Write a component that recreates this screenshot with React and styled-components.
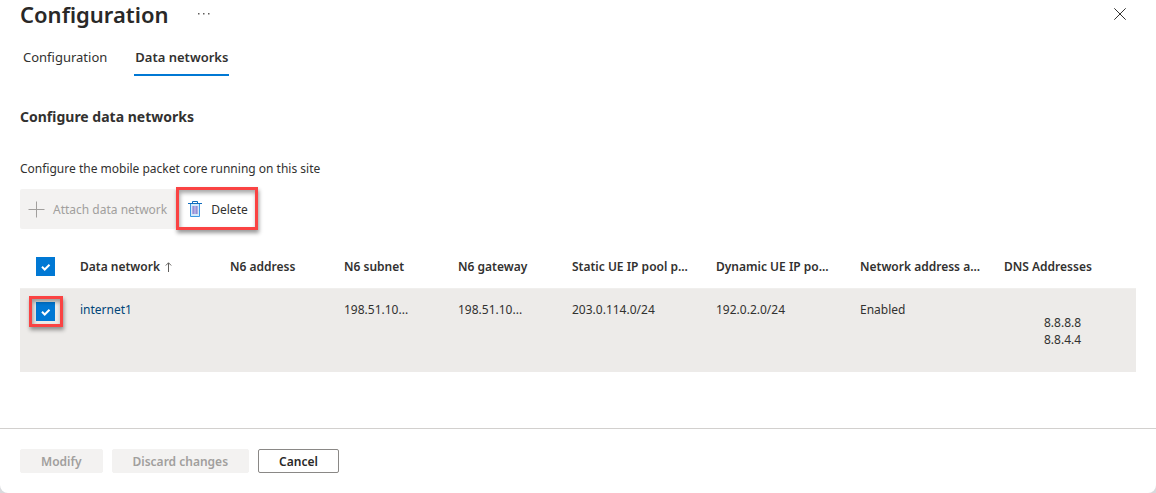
import React, { useState } from "react";
import styled, { createGlobalStyle, css } from "styled-components";

const GlobalStyle = createGlobalStyle`
  *, *::before, *::after { box-sizing: border-box; }
  body {
    margin: 0;
    background: #d9dadd;
    color: #323130;
    font: 12px/17px "Segoe UI", "Noto Sans", "Open Sans", sans-serif;
  }
  button { font: inherit; color: inherit; }
`;

const Blade = styled.div`
  display: flex;
  flex-direction: column;
  min-height: 100vh;
  background: #fff;
  border-radius: 0 0 8px 8px;
`;

const Header = styled.header`
  display: flex;
  align-items: center;
  height: 28px;
  padding: 0 28px 0 20px;
`;

const Title = styled.h1`
  margin: 0;
  font-size: 22px;
  line-height: 26px;
  font-weight: 600;
  color: #292827;
`;

const IconButton = styled.button`
  display: flex;
  align-items: center;
  justify-content: center;
  width: 16px;
  height: 16px;
  padding: 0;
  border: 0;
  background: none;
`;

const MoreButton = styled(IconButton)`
  margin-left: 27px;
`;

const CloseButton = styled(IconButton)`
  margin-left: auto;
`;

const TabList = styled.nav`
  display: flex;
  gap: 26px;
  margin-top: 12px;
  padding: 0 22px;
`;

const Tab = styled.button`
  height: 36px;
  padding: 0 1px;
  border: 0;
  border-bottom: 2px solid ${(p) => (p.$active ? "#0078d4" : "transparent")};
  background: none;
  font-size: 13px;
  font-weight: ${(p) => (p.$active ? 600 : 400)};
`;

const Content = styled.main`
  flex: 1;
  padding: 30px 20px 56px;
`;

const SectionTitle = styled.h2`
  margin: 0;
  font-size: 14px;
  line-height: 22px;
  font-weight: 700;
`;

const Description = styled.p`
  margin: 32px 0 12px;
`;

const Toolbar = styled.div`
  display: flex;
`;

const Command = styled.button`
  position: relative;
  display: flex;
  align-items: center;
  gap: 8px;
  height: 40px;
  padding: 0 9px 0 8px;
  border: 0;
  border-radius: 2px;
  background: #fff;

  &:disabled {
    background: #f3f2f1;
    color: #a19f9d;
  }
`;

const DeleteCommand = styled(Command)`
  padding: 0 10px 0 11px;
`;

const Callout = styled.span`
  position: absolute;
  inset: ${(p) => p.$inset};
  border: 3px solid #fa4343;
  box-shadow: 1px 3px 4px rgba(0, 0, 0, 0.4), inset 1px 3px 4px rgba(0, 0, 0, 0.35);
  pointer-events: none;
`;

const Table = styled.table`
  width: 100%;
  margin-top: 16px;
  border-collapse: collapse;
  table-layout: fixed;
`;

const Col = styled.col`
  width: ${(p) => (p.$width ? `${p.$width}px` : "auto")};
`;

const cell = css`
  padding: 0 8px;
  text-align: left;
  white-space: nowrap;
`;

const HeadCell = styled.th`
  ${cell}
  height: 43px;
  font-weight: 600;
`;

const Row = styled.tr`
  height: 84px;
  background: #edebe9;
  border-top: 1px solid #f0efed;
`;

const Cell = styled.td`
  ${cell}
  padding-top: 12px;
  vertical-align: top;
`;

const CheckWrap = styled.label`
  position: relative;
  display: block;
  width: 19px;
  height: 19px;
  margin: 1px 0 0 8px;
`;

const CheckInput = styled.input`
  appearance: none;
  display: block;
  width: 19px;
  height: 19px;
  margin: 0;
  border: 1px solid #605e5c;
  background: #fff;

  &:checked {
    border-color: #0078d4;
    background: #0078d4;
  }
`;

const CheckMark = styled.svg`
  position: absolute;
  inset: 0;
  pointer-events: none;
`;

const SortArrow = styled.svg`
  margin-left: 5px;
  vertical-align: -1px;
`;

const ResourceLink = styled.a`
  color: #004578;
  text-decoration: none;
`;

const AddressList = styled.ul`
  margin: 13px 0 0;
  padding-left: 40px;
  list-style: none;
`;

const Footer = styled.footer`
  display: flex;
  gap: 9px;
  padding: 20px;
  border-top: 1px solid #d2d0ce;
`;

const FooterButton = styled.button`
  height: 24px;
  padding: 0 20px;
  border: 1px solid #8a8886;
  border-radius: 2px;
  background: #fff;
  font-weight: 600;
  color: #292827;

  &:disabled {
    border-color: #f3f2f1;
    background: #f3f2f1;
    color: #a19f9d;
  }
`;

const columns = [
  { name: "Data network", width: 150, sorted: true },
  { name: "N6 address", width: 114 },
  { name: "N6 subnet", width: 114 },
  { name: "N6 gateway", width: 114 },
  { name: "Static UE IP pool p...", width: 144 },
  { name: "Dynamic UE IP po...", width: 144 },
  { name: "Network address a...", width: 144 },
  { name: "DNS Addresses" },
];

function Checkbox({ label, checked, onChange, children }) {
  return (
    <CheckWrap>
      <CheckInput
        type="checkbox"
        aria-label={label}
        checked={checked}
        onChange={(e) => onChange(e.target.checked)}
      />
      {checked && (
        <CheckMark width="19" height="19" viewBox="0 0 19 19" fill="none">
          <path d="M6 9.8l2.7 2.7 4.8-4.8" stroke="#fff" strokeWidth="2" />
        </CheckMark>
      )}
      {children}
    </CheckWrap>
  );
}

function PlusIcon() {
  return (
    <svg width="17" height="17" viewBox="0 0 17 17" stroke="#a19f9d" aria-hidden="true">
      <path d="M8.5 0.5v16M0.5 8.5h16" />
    </svg>
  );
}

function TrashIcon() {
  return (
    <svg width="16" height="16" viewBox="0 0 16 16" fill="none" aria-hidden="true">
      <path d="M3.5 2.5h9v13h-9z" fill="#d3eafa" stroke="#3b97e3" />
      <path d="M5 5h6v8h-6z" fill="#b3a9e0" />
      <path d="M6.5 5v8M9.5 5v8" stroke="#8f93d8" />
      <path d="M1 2.5h14M5.5 2.5v-2h5v2" stroke="#0f6cbd" />
    </svg>
  );
}

export default function App() {
  const [tab, setTab] = useState("Data networks");
  const [selected, setSelected] = useState(true);

  return (
    <>
      <GlobalStyle />
      <Blade>
        <Header>
          <Title>Configuration</Title>
          <MoreButton aria-label="More options">
            <svg width="12" height="2" viewBox="0 0 12 2" fill="#605e5c">
              <path d="M0 0h1.5v1.5H0zM5 0h1.5v1.5H5zM10 0h1.5v1.5H10z" />
            </svg>
          </MoreButton>
          <CloseButton aria-label="Close">
            <svg width="12" height="12" viewBox="0 0 12 12" stroke="#323130">
              <path d="M0.3 0.3l11.4 11.4M11.7 0.3L0.3 11.7" />
            </svg>
          </CloseButton>
        </Header>

        <TabList>
          {["Configuration", "Data networks"].map((name) => (
            <Tab key={name} $active={tab === name} onClick={() => setTab(name)}>
              {name}
            </Tab>
          ))}
        </TabList>

        <Content>
          <SectionTitle>Configure data networks</SectionTitle>
          <Description>Configure the mobile packet core running on this site</Description>

          <Toolbar>
            <Command disabled>
              <PlusIcon />
              Attach data network
            </Command>
            <DeleteCommand>
              <TrashIcon />
              Delete
              <Callout $inset="-2px 0 -1px 0" />
            </DeleteCommand>
          </Toolbar>

          <Table>
            <colgroup>
              <Col $width={52} />
              {columns.map((c) => (
                <Col key={c.name} $width={c.width} />
              ))}
            </colgroup>
            <thead>
              <tr>
                <HeadCell>
                  <Checkbox label="Select all" checked={selected} onChange={setSelected} />
                </HeadCell>
                {columns.map((c) => (
                  <HeadCell key={c.name} scope="col">
                    {c.name}
                    {c.sorted && (
                      <SortArrow width="7" height="10" viewBox="0 0 7 10" fill="none" stroke="#605e5c">
                        <path d="M3.5 10V0.8M0.8 3.5l2.7-2.7 2.7 2.7" />
                      </SortArrow>
                    )}
                  </HeadCell>
                ))}
              </tr>
            </thead>
            <tbody>
              <Row>
                <Cell>
                  <Checkbox label="Select internet1" checked={selected} onChange={setSelected}>
                    <Callout $inset="-6px -8px -6px -7px" />
                  </Checkbox>
                </Cell>
                <Cell>
                  <ResourceLink href="#internet1">internet1</ResourceLink>
                </Cell>
                <Cell />
                <Cell>198.51.10...</Cell>
                <Cell>198.51.10...</Cell>
                <Cell>203.0.114.0/24</Cell>
                <Cell>192.0.2.0/24</Cell>
                <Cell>Enabled</Cell>
                <Cell>
                  <AddressList>
                    <li>8.8.8.8</li>
                    <li>8.8.4.4</li>
                  </AddressList>
                </Cell>
              </Row>
            </tbody>
          </Table>
        </Content>

        <Footer>
          <FooterButton disabled>Modify</FooterButton>
          <FooterButton disabled>Discard changes</FooterButton>
          <FooterButton>Cancel</FooterButton>
        </Footer>
      </Blade>
    </>
  );
}
